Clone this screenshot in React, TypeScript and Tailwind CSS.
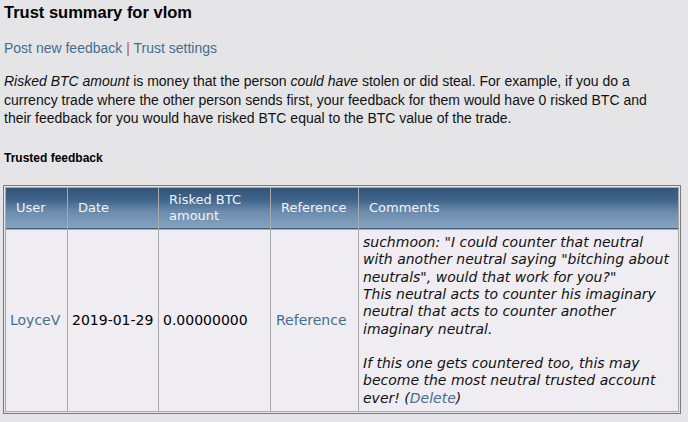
export default function App() {
  const th =
    "bg-[linear-gradient(to_bottom,#32567a_0%,#40648a_30%,#6a8bad_58%,#86a4c1_100%)] border-b border-[#3f5f80] text-[#f2f4f7] text-[13px] pl-[10px] pr-[4px] py-[4px] flex items-center leading-[16px]";
  const td = "bg-[#efedf2] px-[4px] py-[4px] flex items-center leading-[17.3px] text-[14px]";
  const link = "text-[#476c8e]";
  return (
    <div className="min-h-[422px] w-[688px] bg-[#e5e5e8] pl-[3px] font-['Liberation_Sans',Arial,sans-serif] text-black">
      <div className="pl-px">
        <h1 className="pt-px text-[16.5px] font-bold leading-[22px]">Trust summary for vlom</h1>
        <div className="mt-[17px] text-[14px] leading-[17px]">
          <span className={link}>Post new feedback</span>
          <span className="text-[#c06010]"> | </span>
          <span className={link}>Trust settings</span>
        </div>
        <p className="mt-[15px] w-[670px] text-[14px] leading-[18.67px] text-[#111]">
          <i>Risked BTC amount</i> is money that the person <i>could have</i> stolen or did steal. For example, if you
          do a currency trade where the other person sends first, your feedback for them would have 0 risked BTC and
          their feedback for you would have risked BTC equal to the BTC value of the trade.
        </p>
        <div className="mt-[23px] text-[12px] font-bold leading-[14px]">Trusted feedback</div>
      </div>
      <div className="mt-[20px] w-[678px] border border-[#7a7a7a] p-px">
        <div className="grid grid-cols-[61px_90px_111px_87px_1fr] gap-px bg-[#a9a9a9] p-px font-['DejaVu_Sans',Verdana,sans-serif]">
          <div className={th}>User</div>
          <div className={th}>Date</div>
          <div className={th}>
            Risked BTC
            <br />
            amount
          </div>
          <div className={th}>Reference</div>
          <div className={th}>Comments</div>

          <div className={td}>
            <span className={link}>LoyceV</span>
          </div>
          <div className={td}>2019-01-29</div>
          <div className={td}>0.00000000</div>
          <div className={td + " pl-[5px]"}>
            <span className={link}>Reference</span>
          </div>
          <div className={td + " italic text-[#111]"}>
            <div>
              suchmoon: "I could counter that neutral with another neutral saying "bitching about neutrals", would that
              work for you?"
              <br />
              This neutral acts to counter his imaginary neutral that acts to counter another imaginary neutral.
              <br />
              <br />
              If this one gets countered too, this may become the most neutral trusted account ever! (
              <span className={link}>Delete</span>)
            </div>
          </div>
        </div>
      </div>
    </div>
  );
}
